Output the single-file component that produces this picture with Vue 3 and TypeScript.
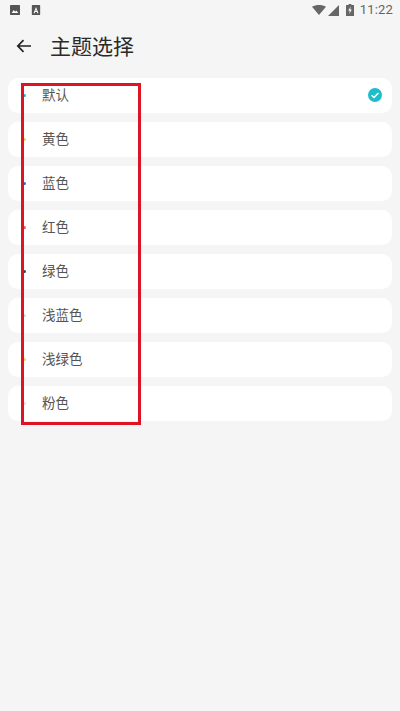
<script setup lang="ts">
interface Theme { name: string; color: string; selected?: boolean }
const themes: Theme[] = [
  { name: '默认', color: '#2bb7c9', selected: true },
  { name: '黄色', color: '#f7c65c' },
  { name: '蓝色', color: '#3f66c4' },
  { name: '红色', color: '#ef5b62' },
  { name: '绿色', color: '#22504a' },
  { name: '浅蓝色', color: '#b5e3e6' },
  { name: '浅绿色', color: '#f5cd6a' },
  { name: '粉色', color: '#f7d3dc' },
]
</script>

<template>
  <div class="page">
    <div class="status">
      <div class="status-left">
        <svg class="note" viewBox="0 0 12 12"><rect width="12" height="12" rx="1" fill="#555" /><path d="M2 9.5 4.5 6l1.6 2 1.4-1.5L10 9.5z" fill="#fff" /></svg>
        <svg class="note" viewBox="0 0 12 12"><rect x="1" width="10" height="12" rx="1" fill="#555" /><path d="M3 10 6 2.5 9 10H7.6L7 8.3H5L4.4 10zM5.4 7.1h1.2L6 5.3z" fill="#fff" /></svg>
      </div>
      <div class="status-right">
        <svg class="wifi" viewBox="0 0 14 10"><path d="M0 1.8C4-.6 10-.6 14 1.8L7 10z" fill="#666" /></svg>
        <svg class="signal" viewBox="0 0 11 11"><path d="M11 0V11H0z" fill="#666" /></svg>
        <svg class="battery" viewBox="0 0 8 12"><path d="M2.6 0h2.8v1H8v11H0V1h2.6z" fill="#666" /><path d="M4.6 2.4 2.2 6.8h1.5L3.3 10 5.8 5.4H4.3z" fill="#f5f5f5" /></svg>
        <span class="time">11:22</span>
      </div>
    </div>

    <header class="header">
      <svg class="back" viewBox="0 0 16 14"><path d="M15 7H2M7.5 1.2 1.8 7l5.7 5.8" fill="none" stroke="#222" stroke-width="1.7" /></svg>
      <h1 class="title">主题选择</h1>
    </header>

    <ul class="list">
      <li v-for="t in themes" :key="t.name" class="row">
        <span class="dot" :style="{ background: t.color }"></span>
        <span class="name">{{ t.name }}</span>
        <svg v-if="t.selected" class="check" viewBox="0 0 14 14">
          <circle cx="7" cy="7" r="7" fill="#1fbccb" />
          <path d="M3.6 7.2 6 9.5l4.4-4.6" fill="none" stroke="#fff" stroke-width="1.5" />
        </svg>
      </li>
    </ul>

    <div class="mark"></div>
  </div>
</template>

<style>
html, body { margin: 0; background: #f5f5f5; }
</style>

<style scoped>
.page {
  position: relative;
  width: 400px;
  height: 711px;
  overflow: hidden;
  background: #f5f5f5;
  font-family: Roboto, "Noto Sans CJK SC", sans-serif;
}
.status {
  height: 20px;
  display: flex;
  align-items: center;
  justify-content: space-between;
  padding: 0 7px 0 10px;
}
.status-left { display: flex; gap: 11px; align-items: center; }
.note { width: 10px; height: 10px; display: block; }
.status-right { display: flex; align-items: center; }
.wifi { width: 14px; height: 10px; margin-right: 2px; }
.signal { width: 11px; height: 11px; margin-right: 7px; }
.battery { width: 8px; height: 12px; margin-right: 6px; }
.time { font-size: 13px; color: #666; line-height: 20px; letter-spacing: 0.2px; }
.header {
  height: 58px;
  box-sizing: border-box;
  display: flex;
  align-items: center;
  padding: 0 0 4px 16px;
}
.back { width: 16px; height: 14px; margin: -2px 19px 0 0; }
.title {
  margin: 0 0 0 -1px;
  font-size: 21px;
  font-weight: 400;
  color: #2a2a2a;
  line-height: 1;
}
.list {
  list-style: none;
  margin: 0;
  padding: 0 8px;
  display: flex;
  flex-direction: column;
  gap: 9px;
}
.row {
  position: relative;
  height: 35px;
  background: #fff;
  border-radius: 10px;
  display: flex;
  align-items: center;
  padding: 0 10px 0 15px;
  box-sizing: border-box;
}
.dot {
  width: 3px;
  height: 3px;
  border-radius: 50%;
  margin-right: 16px;
  margin-top: -1px;
  flex: none;
}
.name {
  font-size: 13.5px;
  color: #555;
  line-height: 1;
  margin-top: 1px;
  flex: 1;
}
.check { width: 14px; height: 14px; flex: none; margin-top: -1px; }
.mark {
  position: absolute;
  left: 21px;
  top: 83px;
  width: 114px;
  height: 336px;
  border: 3px solid #dc1423;
}
</style>
